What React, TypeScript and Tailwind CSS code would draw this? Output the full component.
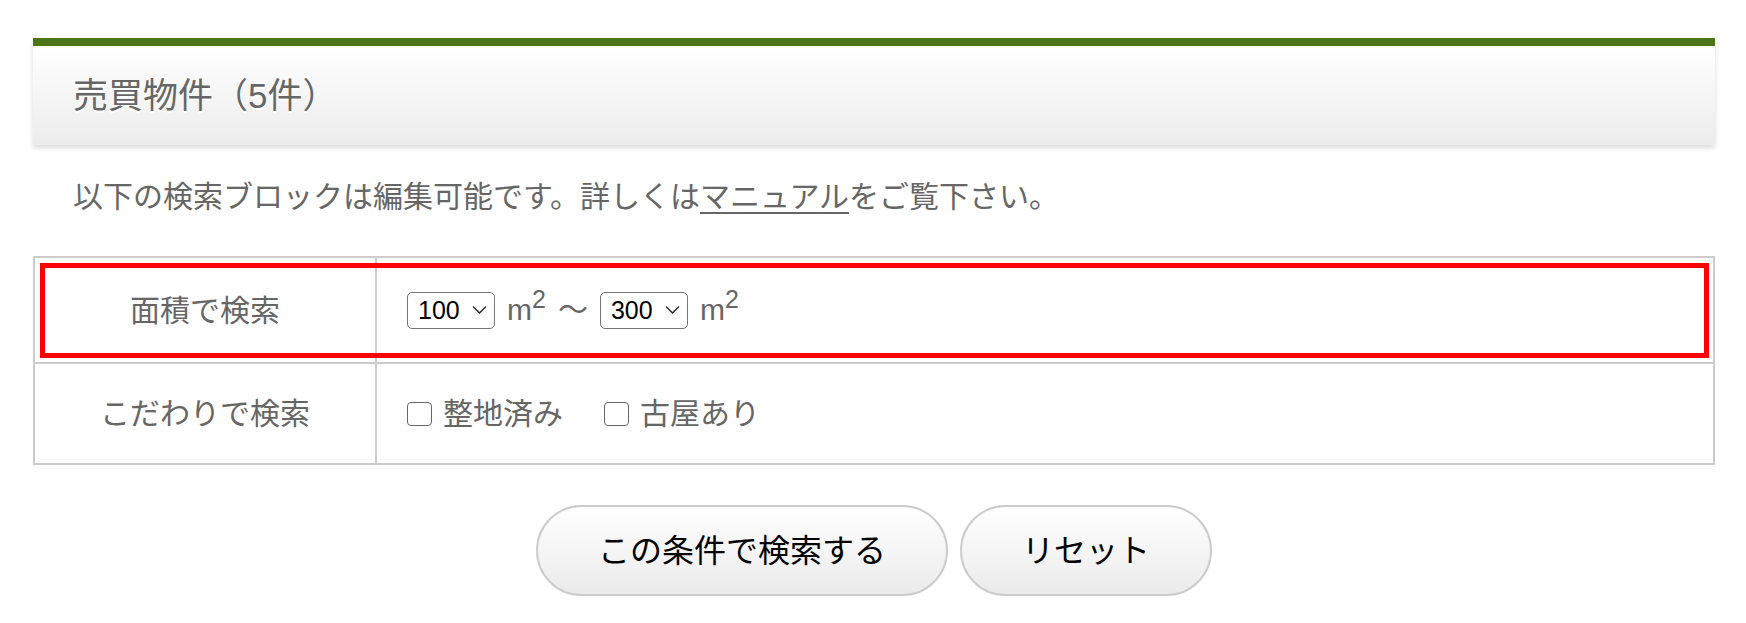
import React from "react";

const FONT = '"Liberation Sans", "Noto Sans CJK JP", sans-serif';

function Select({ value }: { value: string }) {
  return (
    <span className="relative inline-flex">
      <select
        defaultValue={value}
        className="appearance-none w-[88px] h-[37px] pl-[10px] pr-[26px] border-[1.5px] border-[#767676] rounded-[5px] bg-white text-black text-[25px] leading-[35px] outline-none"
        style={{ fontFamily: FONT }}
      >
        <option>{value}</option>
      </select>
      <svg
        className="pointer-events-none absolute right-[8px] top-[13px]"
        width="15"
        height="10"
        viewBox="0 0 15 10"
        fill="none"
      >
        <path d="M1.5 2 L7.5 8 L13.5 2" stroke="#222" strokeWidth="1.4" strokeLinecap="round" strokeLinejoin="round" />
      </svg>
    </span>
  );
}

function M2() {
  return (
    <span className="text-[30px] leading-[40px] text-[#666]">
      m<sup className="text-[25px]">2</sup>
    </span>
  );
}

function Check({ label }: { label: string }) {
  return (
    <label className="inline-flex items-center gap-[11px]">
      <input
        type="checkbox"
        className="appearance-none w-[25px] h-[24px] border-[1.5px] border-[#666] rounded-[4px] bg-white"
      />
      <span className="text-[30px] leading-[40px] text-[#666]">{label}</span>
    </label>
  );
}

export default function App() {
  return (
    <div
      className="w-full h-[623px] bg-white pl-[33px] pr-[31px] pt-[38px] overflow-hidden"
      style={{ fontFamily: FONT }}
    >
      <div className="h-[107px] border-t-[8px] border-[#4b7518] bg-gradient-to-b from-white to-[#ececec] shadow-[0_3px_5px_rgba(0,0,0,0.14)] flex items-center pl-[40px]">
        <h2 className="text-[35px] leading-[44px] text-[#666] font-normal [text-shadow:0_2px_0_#fff]">
          売買物件（5件）
        </h2>
      </div>

      <p className="mt-[32px] pl-[40px] text-[30px] leading-[40px] text-[#666]">
        以下の検索ブロックは編集可能です。詳しくは
        <span className="underline decoration-[2px] underline-offset-[5px]">マニュアル</span>
        をご覧下さい。
      </p>

      <div className="mt-[39px] border-2 border-[#ccc]">
        <div className="relative flex h-[106px] border-b-2 border-[#ccc]">
          <div className="w-[342px] shrink-0 border-r-2 border-[#ccc] flex items-center justify-center text-[30px] text-[#666]">
            面積で検索
          </div>
          <div className="flex-1 flex items-center pl-[30px] gap-[12px]">
            <Select value="100" />
            <M2 />
            <span className="text-[30px] leading-[40px] text-[#666]">〜</span>
            <Select value="300" />
            <M2 />
          </div>
          <div className="pointer-events-none absolute left-[5px] right-[4px] top-[5px] bottom-[4px] border-[5px] border-[#ff0000]" />
        </div>
        <div className="flex h-[99px]">
          <div className="w-[342px] shrink-0 border-r-2 border-[#ccc] flex items-center justify-center text-[30px] text-[#666]">
            こだわりで検索
          </div>
          <div className="flex-1 flex items-center pl-[30px] gap-[41px]">
            <Check label="整地済み" />
            <Check label="古屋あり" />
          </div>
        </div>
      </div>

      <div className="mt-[40px] flex justify-center gap-[12px]">
        <button className="h-[91px] px-[60px] rounded-full border-2 border-[#ccc] bg-gradient-to-b from-white to-[#ebebeb] text-[32px] text-black">
          この条件で検索する
        </button>
        <button className="h-[91px] px-[60px] rounded-full border-2 border-[#ccc] bg-gradient-to-b from-white to-[#ebebeb] text-[32px] text-black">
          リセット
        </button>
      </div>
    </div>
  );
}
